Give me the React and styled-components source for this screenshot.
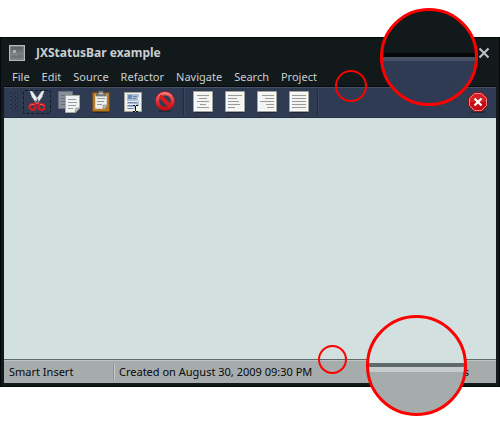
import React from "react";
import styled, { createGlobalStyle } from "styled-components";

const GlobalStyle = createGlobalStyle`
  * { box-sizing: border-box; }
  body {
    margin: 0;
    background: #fff;
    font-family: "Noto Sans", "Open Sans", sans-serif;
    font-size: 11px;
    line-height: 16px;
  }
  button { font: inherit; color: inherit; background: none; border: 0; padding: 0; }
`;

const Page = styled.main`
  position: relative;
  display: flex;
  min-height: 100vh;
  padding: 37px 0 38px;
`;

const Window = styled.section`
  flex: 1;
  min-width: 0;
  display: flex;
  flex-direction: column;
  padding: 0 3px 3px;
  border: 1px solid #05090a;
  background: #12191b;
  color: #c9ced1;
`;

const TitleBar = styled.header`
  display: flex;
  align-items: center;
  gap: 11px;
  height: 30px;
  padding: 0 6px 0 5px;
`;

const Title = styled.h1`
  flex: 1;
  margin: 0;
  font-size: 12px;
  line-height: 18px;
  font-weight: 700;
`;

const WindowClose = styled.button`
  display: flex;
  color: #c0c3cb;
`;

const MenuBar = styled.nav`
  display: flex;
  align-items: center;
  gap: 12px;
  height: 18px;
  padding: 0 8px 1px;
`;

const ToolBar = styled.div`
  display: flex;
  align-items: center;
  gap: 4px;
  height: 32px;
  padding: 0 4px 0 6px;
  border-top: 1px solid #080a0b;
  border-bottom: 1px solid #273143;
  background: #2f3b52;
  box-shadow: inset 0 1px #465164;
`;

const Grip = styled.svg`
  width: 9px;
  height: 22px;
`;

const ToolButton = styled.button`
  display: flex;
  align-items: center;
  justify-content: center;
  width: 28px;
  height: 24px;
  margin-left: ${(p) => (p.$end ? "auto" : "0")};
  border-radius: 2px;
  outline: ${(p) => (p.$focused ? "1px dashed #141a24" : "none")};
  outline-offset: -1px;
`;

const Divider = styled.span`
  width: 2px;
  height: 26px;
  background: linear-gradient(90deg, #212b3b 50%, #3a465c 50%);
`;

const Content = styled.div`
  flex: 1;
  background: #d2e0df;
`;

const StatusBar = styled.footer`
  display: flex;
  align-items: center;
  height: 24px;
  padding: 1px 27px 0 5px;
  border-top: 1px solid #5f6969;
  background: #a6acac;
  box-shadow: inset 0 1px #bdc4c4;
  color: #08090a;
`;

const StatusCell = styled.span`
  flex: ${(p) => (p.$grow ? "1" : "none")};
  width: ${(p) => (p.$wide ? "104px" : "auto")};
`;

const StatusDivider = styled.span`
  width: 2px;
  height: 16px;
  margin-right: 4px;
  background: linear-gradient(90deg, #8d9494 50%, #c3caca 50%);
`;

const Ring = styled.div`
  position: absolute;
  top: ${(p) => p.$top}px;
  right: ${(p) => p.$right}px;
  width: ${(p) => p.$size}px;
  height: ${(p) => p.$size}px;
  border: ${(p) => (p.$fill ? 3 : 2)}px solid #f00;
  border-radius: 50%;
  background: ${(p) => p.$fill || "none"};
  pointer-events: none;
`;

const topEdge =
  "linear-gradient(#12191b 42px, #070909 42px, #070909 46px, #465164 46px, #465164 50px, #2f3b52 50px)";
const bottomEdge =
  "linear-gradient(#d2e0df 45px, #5f6969 45px, #5f6969 49px, #c5cccc 49px, #c5cccc 54px, #a6acac 54px)";

const Icon = ({ children }) => (
  <svg width="24" height="24" viewBox="0 0 24 24" aria-hidden="true">{children}</svg>
);

const AppIcon = () => (
  <svg width="16" height="16" viewBox="0 0 16 16" aria-hidden="true">
    <defs>
      <linearGradient id="app" x2="0" y2="1">
        <stop stopColor="#59625f" /><stop offset="1" stopColor="#8f9797" />
      </linearGradient>
    </defs>
    <path fill="#b5bab9" d="M0 0h16v16H0z" />
    <path fill="#7c8584" d="M1 1h14v14H1z" />
    <path fill="url(#app)" d="M2 2h12v11H2z" />
    <path fill="#aab0af" d="M4 5h3v3H4z" />
    <path fill="#6d7674" d="M2 13V11l3-1 3 1 3-2 3 1v3z" />
  </svg>
);

const ScissorsIcon = () => (
  <Icon>
    <path d="M5 1h2l7 10-2 3-5-7zM19 1h-2l-7 10 2 3 5-7z" fill="#e9eaeb" stroke="#c3c6ca" strokeWidth=".5" />
    <path d="M6.500 2.500L12 11" stroke="#fff" />
    <g fill="none">
      <path d="M11 13l-2 1.500M13 13l2 1.500" stroke="#d91f26" strokeWidth="3" />
      <ellipse cx="7.500" cy="17" rx="3" ry="2.800" stroke="#d01c23" strokeWidth="2.200" />
      <ellipse cx="16.500" cy="17" rx="3" ry="2.800" stroke="#d01c23" strokeWidth="2.200" />
      <path d="M5 16q1-2 4-1.500M15 14.500q3-.5 4 1.500" stroke="#ff7070" strokeWidth=".8" />
    </g>
    <path d="M11.500 11h1v1h-1z" fill="#555" />
  </Icon>
);

const CopyIcon = () => (
  <Icon>
    <path fill="#888e9a" stroke="#696f7b" d="M1.500 1.500h14v17h-14z" />
    <path stroke="#666e7d" d="M4 5.500h9M4 8.500h4M4 11.500h4M4 14.500h4" />
    <path fill="#f0f1f1" stroke="#aaa99f" d="M8.500 5.500h14V18l-4 4.500h-10z" />
    <path stroke="#9ba0a6" d="M11 9.500h8M11 12.500h9M11 15.500h8M11 18.500h5" />
    <path fill="#bfc1c0" stroke="#8d8e89" strokeWidth=".6" d="M18 22l1-4h4z" />
  </Icon>
);

const PasteIcon = () => (
  <Icon>
    <ellipse cx="12" cy="22" rx="9" ry="1" fill="#1d2635" />
    <rect x="3.500" y="2.500" width="17" height="19" rx="1" fill="#b87418" stroke="#754a16" />
    <path fill="#eeefeb" stroke="#a29c8b" strokeWidth=".6" d="M6 4h12v12l-3 3H6z" />
    <path fill="#bfc0bb" stroke="#777" strokeWidth=".5" d="M14 19v-4h4z" />
    <path stroke="#989b9b" d="M8 8.500h8M8 11.500h7M8 14.500h5" />
    <path fill="#858885" stroke="#4f5351" strokeWidth=".6" d="M7 6V4h2l1-3h4l1 3h2v2z" />
    <path stroke="#c7cac5" d="M10 3.500h4" />
  </Icon>
);

const SelectIcon = () => (
  <Icon>
    <path fill="#eff1ef" stroke="#a2a397" d="M3.500 2.500h17v19h-17z" />
    <path fill="#a9bdd6" d="M6 4h12v3h-1v4h1v5h-3v3H6z" />
    <path stroke="#e6edf3" d="M6 11.500h11M6 14.500h9M6 17.500h7" />
    <path fill="#6e89ae" d="M7 5h4v4H7z" />
    <path stroke="#6e86a5" d="M12 6.500h4M12 8.500h3M7 12.500h9M7 15.500h7M7 18.500h5" />
    <path stroke="#090b0e" fill="none" d="M12 15.500h2M15 15.500h2M14.500 16v5M12 21.500h2M15 21.500h2" />
  </Icon>
);

const StopIcon = () => (
  <Icon>
    <defs>
      <linearGradient id="stop" x2="0" y2="1"><stop stopColor="#f06464" /><stop offset="1" stopColor="#c40e13" /></linearGradient>
    </defs>
    <ellipse cx="12" cy="21" rx="7" ry="1" fill="#202a3b" />
    <circle cx="12" cy="11" r="8" fill="none" stroke="#8d1a22" strokeWidth="4" />
    <g fill="none" stroke="url(#stop)" strokeWidth="3.500">
      <circle cx="12" cy="11" r="7.600" />
      <path d="M6.500 5.500l11 11" stroke="#d61c20" strokeWidth="4" />
    </g>
    <path d="M5 8q2-5 7-5 4 0 6 3" fill="none" stroke="#ff9090" strokeWidth=".8" />
  </Icon>
);

const lineSets = {
  center: "M6 5.500h12M8 8.500h8M6 11.500h12M9 14.500h6M6 17.500h12",
  left: "M5 5.500h14M5 8.500h9M5 11.500h11M5 14.500h12M5 17.500h7",
  right: "M7 5.500h12M10 8.500h9M5 11.500h14M11 14.500h8M12 17.500h7",
  justify: "M5 5.500h14M5 8.500h14M5 11.500h14M5 14.500h14M5 17.500h14",
};

const AlignIcon = ({ kind }) => (
  <Icon>
    <path stroke="#1d2635" d="M4 22.500h16" />
    <path fill="#f4f4f3" stroke="#a09f98" d="M2.500 1.500h19v20h-19z" />
    <path fill="none" stroke="#fff" d="M3.500 2.500h17v18h-17z" />
    <path stroke="#999b99" d={lineSets[kind]} />
  </Icon>
);

const CloseIcon = () => (
  <Icon>
    <ellipse cx="12" cy="22" rx="8" ry="1" fill="#1d2635" />
    <path fill="#d42027" stroke="#8b0f18" d="M8 2.500h8l5.500 5.500v7.500L16 21.500H8L2.500 15.500V8z" />
    <path fill="none" stroke="#ef8585" d="M8.500 3.500h7l5 5v7l-5 5h-7l-5-5v-7z" />
    <path fill="#c70c13" d="M4 12h16v3l-5 5H9l-5-5z" />
    <path d="M8.500 8.500l7 7M15.500 8.500l-7 7" stroke="#fff" strokeWidth="2.200" />
  </Icon>
);

const menus = ["File", "Edit", "Source", "Refactor", "Navigate", "Search", "Project"];

export default function App() {
  return (
    <Page>
      <GlobalStyle />
      <Window>
        <TitleBar>
          <AppIcon />
          <Title>JXStatusBar example</Title>
          <WindowClose aria-label="Close window">
            <svg width="12" height="12" viewBox="0 0 12 12" aria-hidden="true">
              <path d="M1.500 1.500l9 9M10.500 1.500l-9 9" stroke="currentColor" strokeWidth="2" />
            </svg>
          </WindowClose>
        </TitleBar>
        <MenuBar aria-label="Main menu">
          {menus.map((name) => <button key={name}>{name}</button>)}
        </MenuBar>
        <ToolBar role="toolbar" aria-label="Editing">
          <Grip viewBox="0 0 9 22" aria-hidden="true">
            <path stroke="#141c29" strokeDasharray="1 3" d="M1.500 1v20M5.500 1v20" />
            <path stroke="#141c29" strokeDasharray="1 3" d="M3.500 3v18M7.500 3v18" opacity=".7" />
          </Grip>
          <ToolButton $focused aria-label="Cut"><ScissorsIcon /></ToolButton>
          <ToolButton aria-label="Copy"><CopyIcon /></ToolButton>
          <ToolButton aria-label="Paste"><PasteIcon /></ToolButton>
          <ToolButton aria-label="Select all"><SelectIcon /></ToolButton>
          <ToolButton aria-label="Delete"><StopIcon /></ToolButton>
          <Divider />
          <ToolButton aria-label="Align center"><AlignIcon kind="center" /></ToolButton>
          <ToolButton aria-label="Align left"><AlignIcon kind="left" /></ToolButton>
          <ToolButton aria-label="Align right"><AlignIcon kind="right" /></ToolButton>
          <ToolButton aria-label="Justify"><AlignIcon kind="justify" /></ToolButton>
          <Divider />
          <ToolButton $end aria-label="Exit"><CloseIcon /></ToolButton>
        </ToolBar>
        <Content />
        <StatusBar>
          <StatusCell $wide>Smart Insert</StatusCell>
          <StatusDivider />
          <StatusCell $grow>Created on August 30, 2009 09:30 PM</StatusCell>
          <StatusCell>s</StatusCell>
        </StatusBar>
      </Window>
      <Ring $top={70} $right={133} $size={32} />
      <Ring $top={8} $right={22} $size={98} $fill={topEdge} />
      <Ring $top={345} $right={153} $size={29} />
      <Ring $top={315} $right={33} $size={101} $fill={bottomEdge} />
    </Page>
  );
}
